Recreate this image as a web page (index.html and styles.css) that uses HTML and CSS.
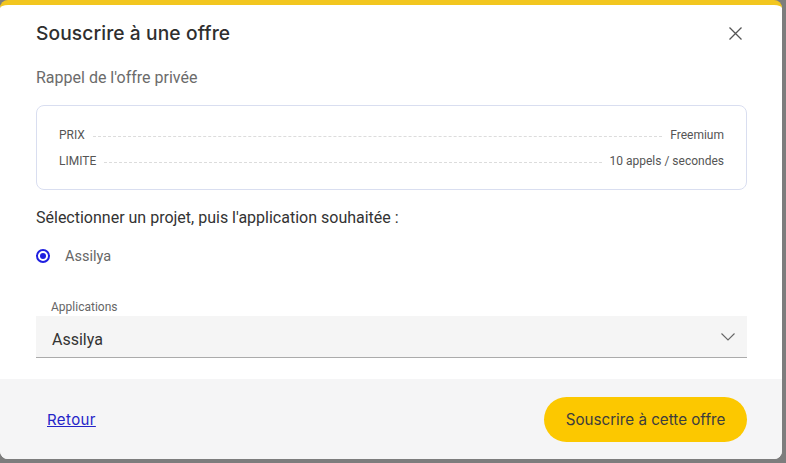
FILE: index.html
```html
<!DOCTYPE html>
<html lang="fr">
<head>
<meta charset="utf-8">
<title>Souscrire à une offre</title>
<link rel="stylesheet" href="styles.css">
</head>
<body>
<div class="backdrop">
  <div class="modal">
    <div class="content">
      <div class="header">
        <h1 class="title">Souscrire à une offre</h1>
        <button class="close" aria-label="Fermer">
          <svg width="13" height="13" viewBox="0 0 13 13"><path d="M0.5 0.5 L12.5 12.5 M12.5 0.5 L0.5 12.5" stroke="#555" stroke-width="1.3" fill="none"/></svg>
        </button>
      </div>
      <p class="subtitle">Rappel de l'offre privée</p>
      <div class="card">
        <div class="row"><span class="key">PRIX</span><span class="dots"></span><span class="val">Freemium</span></div>
        <div class="row"><span class="key">LIMITE</span><span class="dots"></span><span class="val">10 appels / secondes</span></div>
      </div>
      <p class="question">Sélectionner un projet, puis l'application souhaitée :</p>
      <label class="radio"><span class="radio-dot"></span><span class="radio-label">Assilya</span></label>
      <div class="field">
        <div class="field-label">Applications</div>
        <div class="select">
          <span class="select-value">Assilya</span>
          <svg class="chevron" width="14" height="8" viewBox="0 0 14 8"><path d="M0.5 0.5 L7 7 L13.5 0.5" stroke="#666" stroke-width="1.1" fill="none"/></svg>
        </div>
      </div>
    </div>
    <div class="footer">
      <a class="back" href="#">Retour</a>
      <button class="cta">Souscrire à cette offre</button>
    </div>
  </div>
</div>
</body>
</html>
```
FILE: styles.css
```css
html, body {
  margin: 0;
  padding: 0;
}
body {
  background: #7d7d7d;
  width: 786px;
  height: 463px;
  overflow: hidden;
}
.backdrop {
  width: 786px;
  height: 463px;
}
.modal {
  width: 782px;
  height: 459px;
  box-sizing: border-box;
  background: #fff;
  border-top: 5px solid #f2c61f;
  border-radius: 8px;
  overflow: hidden;
  display: flex;
  flex-direction: column;
}
.content {
  flex: 1;
  padding: 0 35px 0 36px;
}
.header {
  height: 56px;
  display: flex;
  align-items: center;
  justify-content: space-between;
  padding-right: 5px;
}
.title {
  margin: 0;
  font-family: "Inter", "Open Sans", sans-serif;
  font-weight: 500;
  font-size: 19.2px;
  color: #2f2f2f;
  letter-spacing: 0.1px;
}
.close {
  border: 0;
  background: none;
  padding: 0;
  width: 13px;
  height: 13px;
  display: flex;
}
.subtitle {
  margin: 7px 0 0;
  line-height: 20px;
  font-family: "Roboto", sans-serif;
  font-size: 16px;
  color: #6b6b6b;
}
.card {
  margin-top: 17px;
  border: 1px solid #d9def0;
  border-radius: 8px;
  padding: 20px 22px 19px 22px;
  display: flex;
  flex-direction: column;
  gap: 8px;
}
.row {
  height: 18px;
  display: flex;
  align-items: center;
  font-family: "Roboto", sans-serif;
  font-size: 12px;
  color: #555;
}
.dots {
  flex: 1;
  margin: 2px 8px 0;
  height: 0;
  border-top: 1px dashed #dcdcdc;
}
.question {
  margin: 18px 0 0;
  line-height: 20px;
  font-family: "Roboto", sans-serif;
  font-size: 16px;
  color: #333;
}
.radio {
  margin-top: 18px;
  height: 20px;
  display: flex;
  align-items: center;
  gap: 15px;
}
.radio-dot {
  width: 10px;
  height: 10px;
  border: 2px solid #1f1fe0;
  border-radius: 50%;
  display: flex;
  align-items: center;
  justify-content: center;
}
.radio-dot::after {
  content: "";
  width: 6px;
  height: 6px;
  border-radius: 50%;
  background: #1f1fe0;
}
.radio-label {
  font-family: "Roboto", sans-serif;
  font-size: 14.5px;
  color: #666;
}
.field {
  margin-top: 34px;
}
.field-label {
  line-height: 14px;
  padding-left: 15px;
  font-family: "Roboto", sans-serif;
  font-size: 12px;
  color: #666;
}
.select {
  margin-top: 2px;
  height: 42px;
  box-sizing: border-box;
  padding: 6px 12px 0 16px;
  background: #f5f5f5;
  border-bottom: 1px solid #ababab;
  display: flex;
  align-items: center;
  justify-content: space-between;
}
.select-value {
  font-family: "Roboto", sans-serif;
  font-size: 16px;
  color: #333;
}
.chevron {
  margin-top: -6px;
}
.footer {
  height: 80px;
  flex: none;
  background: #f5f5f6;
  display: flex;
  align-items: center;
  justify-content: space-between;
  padding: 0 35px 0 47px;
}
.back {
  font-family: "Inter", "Open Sans", sans-serif;
  font-size: 15px;
  letter-spacing: 0.4px;
  color: #2424c8;
  text-decoration: underline;
}
.cta {
  width: 203px;
  height: 45px;
  border: 0;
  border-radius: 23px;
  background: #fcc800;
  font-family: "Inter", "Open Sans", sans-serif;
  font-size: 15.2px;
  color: #3d3d3d;
  cursor: pointer;
}
```
